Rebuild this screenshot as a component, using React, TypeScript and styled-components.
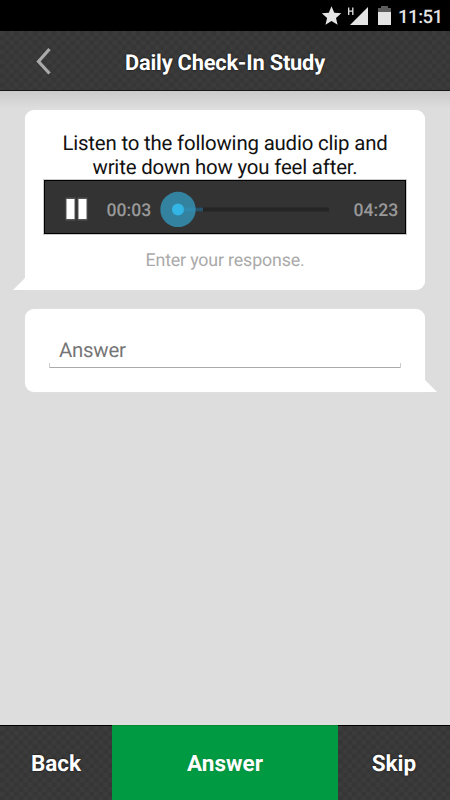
import React from 'react';
import styled, { createGlobalStyle, css } from 'styled-components';

const GlobalStyle = createGlobalStyle`
  * { box-sizing: border-box; }
  body {
    margin: 0;
    background: #ddd;
    font-family: Roboto, sans-serif;
    text-rendering: geometricPrecision;
  }
`;

const texture = css`
  background-color: #393939;
  background-image: repeating-conic-gradient(#363636 0% 25%, #3b3b3b 0% 50%);
  background-size: 9.4px 9.4px;
`;

const Screen = styled.div`
  width: 450px;
  height: 800px;
  display: flex;
  flex-direction: column;
  overflow: hidden;
  background: #ddd;
`;

const StatusBar = styled.div`
  height: 31px;
  flex: none;
  display: flex;
  justify-content: flex-end;
  background: #000;
`;

const Clock = styled.span`
  width: 45px;
  margin: 5px 7px 0 6px;
  font-size: 18.6px;
  line-height: 25px;
  font-weight: 500;
  letter-spacing: -0.5px;
  color: #e4e4e4;
  white-space: nowrap;
`;

const Header = styled.header`
  ${texture}
  height: 60px;
  flex: none;
  display: grid;
  grid-template-columns: 90px 1fr 90px;
  align-items: center;
  border-bottom: 1px solid #171717;
`;

const BackIcon = styled.svg`
  margin-left: 34px;
`;

const Title = styled.h1`
  margin: 6px 0 0;
  font-size: 21.8px;
  line-height: 28px;
  font-weight: 700;
  letter-spacing: -0.2px;
  text-align: center;
  color: #fff;
  white-space: nowrap;
  text-shadow: 0 0 2px #000;
`;

const Content = styled.main`
  flex: 1;
  padding: 19px 25px 0;
  background: linear-gradient(#cbcbcb, #d3d3d3 8px, #ddd 17px);
`;

const Bubble = styled.section<{ $side: 'left' | 'right' }>`
  position: relative;
  background: #fff;
  border-radius: ${p => (p.$side === 'left' ? '9px 9px 9px 0' : '9px 9px 0 9px')};
  box-shadow: 0 0 1px #eee;
  &::after {
    content: '';
    position: absolute;
    bottom: 0;
    ${p => p.$side}: -12px;
    width: 12px;
    height: 12px;
    background: #fff;
    clip-path: ${p => (p.$side === 'left' ? 'polygon(100% 0, 100% 100%, 0 100%)' : 'polygon(0 0, 100% 100%, 0 100%)')};
  }
`;

const Question = styled(Bubble)`
  height: 180px;
  padding: 21px 19px 0;
`;

const Prompt = styled.p`
  margin: 0;
  font-size: 20.4px;
  line-height: 24px;
  letter-spacing: -0.18px;
  text-align: center;
  color: #111;
  white-space: nowrap;
`;

const Player = styled.div`
  height: 54px;
  display: flex;
  align-items: center;
  margin-top: 1px;
  border: 1px solid #000;
  background: #333;
  box-shadow: 0 0 0 1px #ccc;
`;

const PauseIcon = styled.svg`
  margin-left: 19px;
  margin-top: 4px;
`;

const Time = styled.span<{ $gap: number }>`
  margin: 7px 0 0 ${p => p.$gap}px;
  width: 45px;
  font-size: 17.6px;
  line-height: 24px;
  font-weight: 500;
  color: #999;
`;

const Seek = styled.svg`
  margin: 4px 0 0 7.5px;
`;

const Hint = styled.p`
  margin: 16px 0 0;
  font-size: 17.8px;
  line-height: 22px;
  letter-spacing: -0.15px;
  text-align: center;
  color: #aaa;
`;

const Reply = styled(Bubble)`
  height: 83.5px;
  margin-top: 18.5px;
  padding: 26px 24px 0;
`;

const Field = styled.div`
  height: 33px;
  padding: 3px 10px 0;
  font-size: 20.4px;
  line-height: 24px;
  letter-spacing: -0.25px;
  color: #757575;
  background:
    linear-gradient(#ccc, #ccc) left bottom / 1px 5px no-repeat,
    linear-gradient(#ccc, #ccc) right bottom / 1px 5px no-repeat,
    linear-gradient(#aaa, #aaa) bottom / 100% 1px no-repeat;
`;

const Footer = styled.footer`
  height: 75px;
  flex: none;
  display: grid;
  grid-template-columns: 112px 226px 112px;
`;

const Action = styled.button<{ $primary?: boolean }>`
  border: 0;
  border-top: 1px solid ${p => (p.$primary ? '#088530' : '#000')};
  padding: 2px 0 0;
  font: 700 22.5px/28px Roboto, sans-serif;
  color: #fff;
  text-rendering: geometricPrecision;
  text-shadow: 0 0 2px ${p => (p.$primary ? '#078237' : '#000')};
  ${p => (p.$primary ? css`background: #009a43;` : texture)}
`;

export default function App() {
  return (
    <Screen>
      <GlobalStyle />
      <StatusBar>
        <svg width="72" height="31" viewBox="320 0 72 31" fill="#e4e4e4">
          <path d="m331.500 6.200 2.800 6.500 7 .6-5.300 4.600 1.600 6.800-6.100-3.600-6 3.600 1.600-6.800-5.300-4.600 7-.6Z" />
          <path d="M368 7v18h-18Z" />
          <path d="M348.700 7.500v7.500M352.800 7.500v7.500M348.700 11.200h4.100" fill="none" stroke="#e4e4e4" strokeWidth="1.300" />
          <path d="M378 8h3V6h7v2h3v4h-13Z" fill="#5c5c5c" />
          <path d="M378 12h13v13h-13Z" />
        </svg>
        <Clock>11:51</Clock>
      </StatusBar>
      <Header>
        <BackIcon width="20" height="30" viewBox="34 46 20 30">
          <path d="M49.500 49 38.500 61.500 49.500 73.500" fill="none" stroke="#aaa" strokeWidth="3.200" />
        </BackIcon>
        <Title>Daily Check-In Study</Title>
      </Header>
      <Content>
        <Question $side="left">
          <Prompt>Listen to the following audio clip and<br />write down how you feel after.</Prompt>
          <Player>
            <PauseIcon width="25" height="26" viewBox="0 0 25 26">
              <path d="M1.500 1.500h10v23h-10ZM13.500 1.500h10v23h-10Z" fill="#555" />
              <path d="M2.500 3h8v20h-8ZM14.500 3h8v20h-8Z" fill="#fff" />
            </PauseIcon>
            <Time $gap={17.5}>00:03</Time>
            <Seek width="170" height="36" viewBox="159 191 170 36">
              <path d="M178 207.500h151v4H178Z" fill="#252525" />
              <path d="M178 207.500h25v4h-25Z" fill="#28526a" />
              <circle cx="178" cy="209.500" r="17.700" fill="#33829f" />
              <path d="M184 207.500h11v4h-11Z" fill="#3189ae" />
              <circle cx="178" cy="209.500" r="6" fill="#33b5e5" />
            </Seek>
            <Time $gap={24.5}>04:23</Time>
          </Player>
          <Hint>Enter your response.</Hint>
        </Question>
        <Reply $side="right">
          <Field>Answer</Field>
        </Reply>
      </Content>
      <Footer>
        <Action>Back</Action>
        <Action $primary>Answer</Action>
        <Action>Skip</Action>
      </Footer>
    </Screen>
  );
}
